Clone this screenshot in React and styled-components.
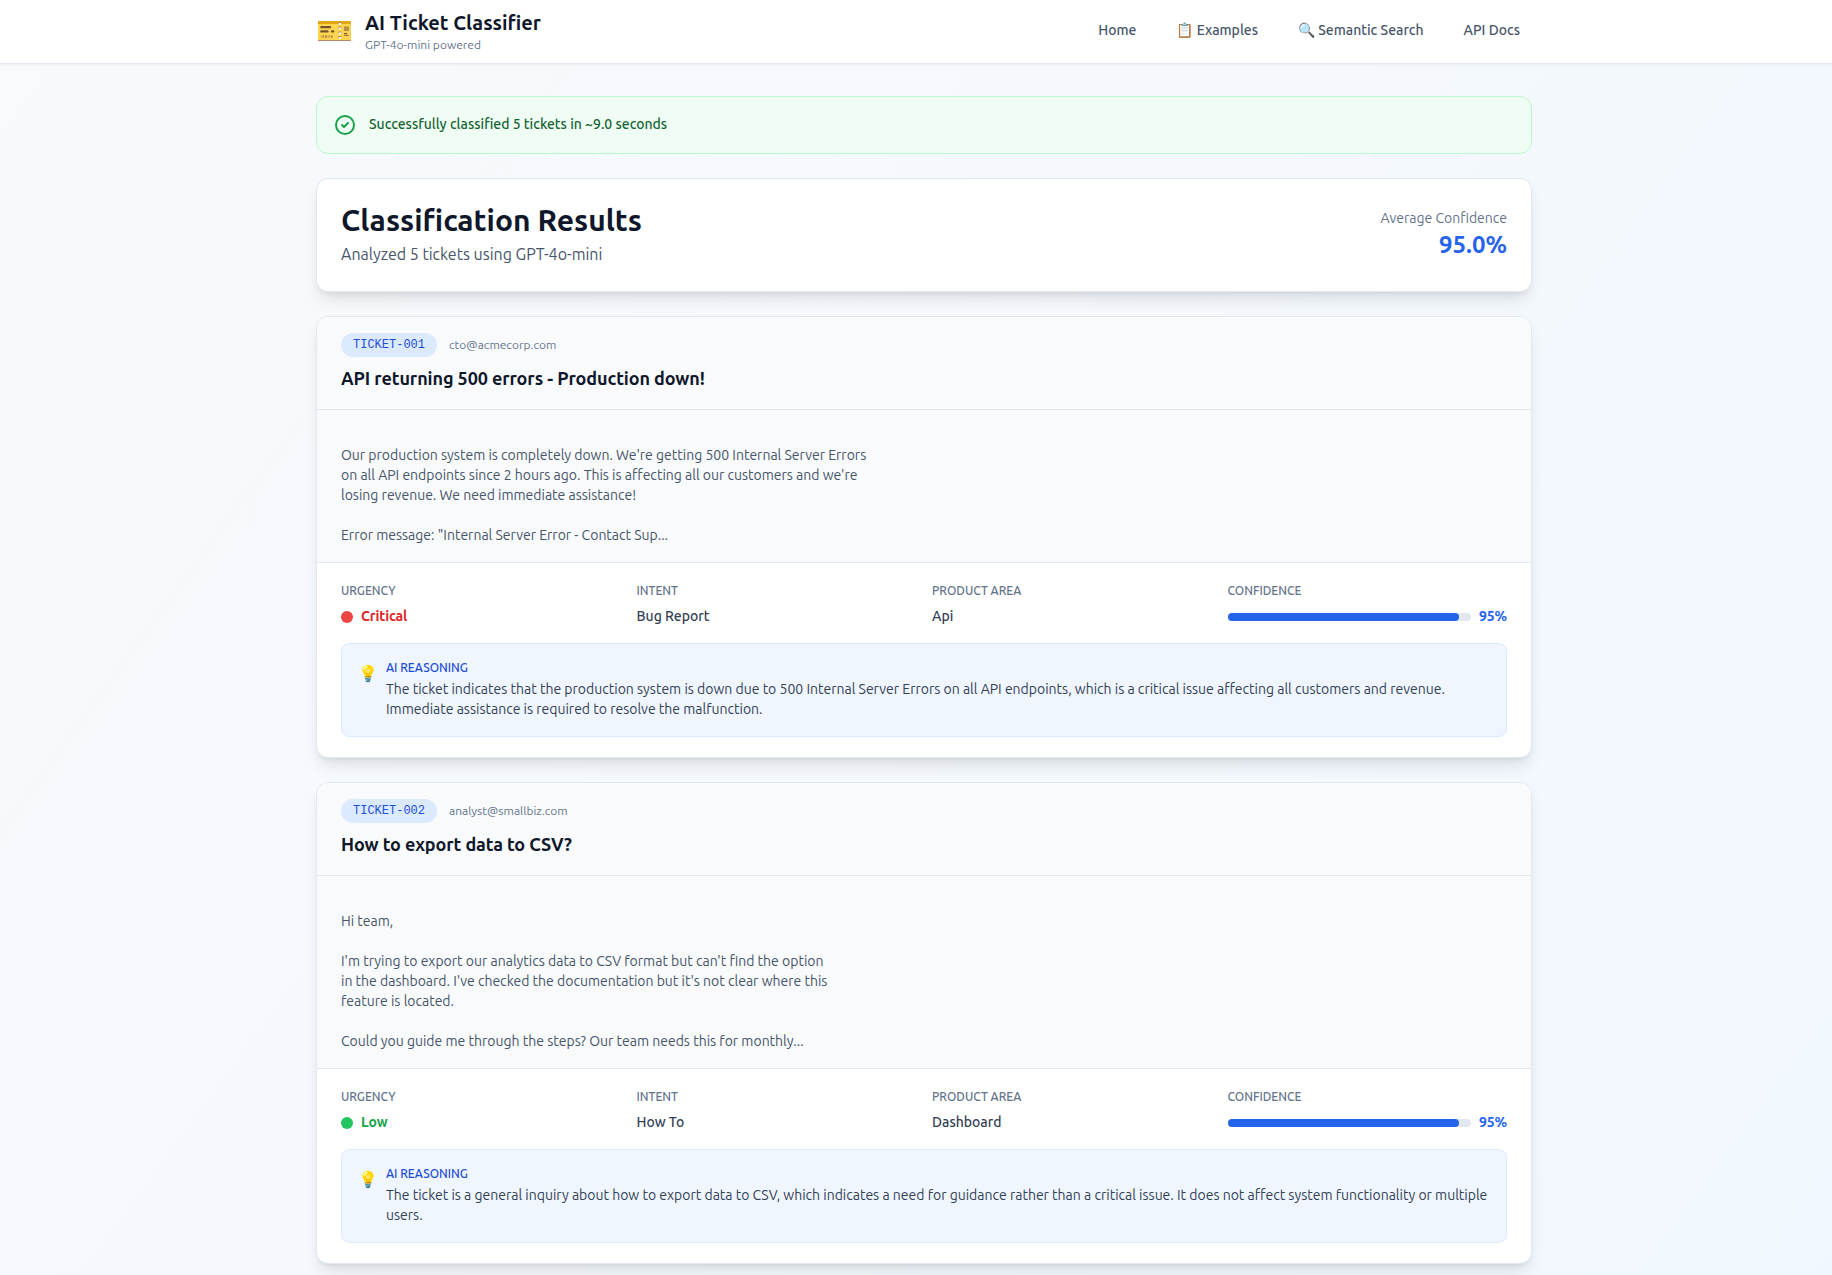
import React from 'react';
import styled, { createGlobalStyle, css } from 'styled-components';

const GlobalStyle = createGlobalStyle`
  *, *::before, *::after { box-sizing: border-box; }
  body {
    margin: 0;
    font-family: Ubuntu, "Open Sans", "Noto Sans", sans-serif;
    font-size: 16px;
    line-height: 24px;
    color: #0f172a;
  }
  h1, h2, h3, p { margin: 0; }
`;

const raised = css`
  margin-top: -1px;
  margin-bottom: 1px;
`;

const Page = styled.div`
  height: 100vh;
  overflow: hidden;
  background: linear-gradient(to bottom right, #f8fafc, #eff6ff) 0 0 / 100% 2500px no-repeat;
`;

const Container = styled.div`
  width: 1280px;
  margin: 0 auto;
  padding: 0 24px 0 40px;
`;

const Header = styled.header`
  height: 64px;
  background: #fff;
  border-bottom: 1px solid #e2e8f0;
  box-shadow: 0 1px 2px rgba(0, 0, 0, 0.05);
`;

const HeaderRow = styled(Container)`
  display: flex;
  align-items: center;
  justify-content: space-between;
  height: 62px;
`;

const Brand = styled.div`
  display: flex;
  align-items: center;
  gap: 12px;
`;

const BrandIcon = styled.span`
  ${raised}
  font-size: 30px;
  line-height: 36px;
`;

const BrandName = styled.h1`
  font-size: 20px;
  line-height: 28px;
  font-weight: 700;
`;

const BrandNote = styled.p`
  font-size: 12px;
  line-height: 16px;
  color: #64748b;
`;

const Nav = styled.nav`
  ${raised}
  display: flex;
  align-items: center;
  gap: 16px;
`;

const NavLink = styled.a`
  padding: 8px 12px;
  font-size: 14px;
  line-height: 20px;
  font-weight: 500;
  color: #475569;
`;

const Main = styled.main`
  display: flex;
  flex-direction: column;
  gap: 24px;
  padding-top: 32px;
`;

const Banner = styled.div`
  display: flex;
  align-items: center;
  gap: 12px;
  padding: 16px;
  border: 1px solid #bbf7d0;
  border-radius: 12px;
  background: #f0fdf4;
`;

const BannerText = styled.p`
  && {
    ${raised}
  }
  color: #166534;
  font-size: 14px;
  line-height: 20px;
  font-weight: 500;
`;

const CheckIcon = styled.svg`
  width: 24px;
  height: 24px;
  color: #16a34a;
`;

const Card = styled.section`
  border: 1px solid #e2e8f0;
  border-radius: 12px;
  background: #fff;
  overflow: hidden;
  box-shadow: 0 10px 15px -3px rgba(0, 0, 0, 0.1), 0 4px 6px -4px rgba(0, 0, 0, 0.1);
`;

const Summary = styled(Card)`
  display: flex;
  align-items: center;
  justify-content: space-between;
  padding: 23px 24px 25px;
`;

const SummaryTitle = styled.h2`
  font-size: 30px;
  line-height: 36px;
  font-weight: 700;
`;

const SummaryNote = styled.p`
  && {
    margin-top: 4px;
  }
  color: #475569;
`;

const Average = styled.div`
  text-align: right;
`;

const AverageLabel = styled.p`
  font-size: 14px;
  line-height: 20px;
  color: #64748b;
`;

const AverageValue = styled.p`
  padding-top: 1px;
  margin-bottom: -1px !important;
  font-size: 24px;
  line-height: 32px;
  font-weight: 700;
  color: #2563eb;
`;

const TicketHeader = styled.div`
  padding: 16px 24px;
  border-bottom: 1px solid #e2e8f0;
  background: #f8fafc;
`;

const TicketMeta = styled.div`
  display: flex;
  align-items: center;
  gap: 12px;
  margin-bottom: 8px;
`;

const TicketId = styled.span`
  padding: 4px 12px;
  border-radius: 12px;
  background: #dbeafe;
  color: #1d4ed8;
  font-family: "Liberation Mono", monospace;
  font-size: 12px;
  line-height: 16px;
`;

const Sender = styled.span`
  font-size: 12px;
  line-height: 16px;
  color: #64748b;
`;

const TicketTitle = styled.h3`
  && {
    ${raised}
  }
  font-size: 18px;
  line-height: 28px;
  font-weight: 600;
  letter-spacing: -0.1px;
`;

const Message = styled.div`
  padding: 15px 24px 17px;
  border-bottom: 1px solid #e2e8f0;
  background: #f8fafc;
  color: #475569;
  font-size: 14px;
  line-height: 20px;
  white-space: pre-line;
`;

const Details = styled.div`
  padding: 20px 24px;
`;

const Metrics = styled.div`
  display: grid;
  grid-template-columns: repeat(4, 1fr);
  gap: 16px;
  margin-bottom: 16px;
`;

const MetricLabel = styled.p`
  font-size: 12px;
  line-height: 16px;
  font-weight: 500;
  text-transform: uppercase;
  color: #64748b;
`;

const MetricValue = styled.div`
  display: flex;
  align-items: center;
  gap: 8px;
  height: 20px;
  margin-top: 8px;
`;

const MetricText = styled.span`
  ${raised}
  font-size: 14px;
  line-height: 20px;
  font-weight: ${(p) => (p.$color ? 600 : 500)};
  letter-spacing: ${(p) => (p.$color ? '-0.1px' : 'normal')};
  color: ${(p) => p.$color || '#334155'};
`;

const Dot = styled.span`
  width: 12px;
  height: 12px;
  border-radius: 50%;
  background: ${(p) => p.$color};
`;

const Track = styled.div`
  flex: 1;
  height: 8px;
  border-radius: 4px;
  background: #e2e8f0;
`;

const Fill = styled.div`
  width: ${(p) => p.$percent}%;
  height: 8px;
  border-radius: 4px;
  background: #2563eb;
`;

const Reasoning = styled.div`
  display: flex;
  align-items: flex-start;
  gap: 8px;
  padding: 16px;
  border: 1px solid #dbeafe;
  border-radius: 8px;
  background: #eff6ff;
`;

const ReasoningTitle = styled.p`
  font-size: 12px;
  line-height: 16px;
  font-weight: 500;
  color: #1d4ed8;
`;

const ReasoningText = styled.p`
  padding: 3px 0 1px;
  font-size: 14px;
  line-height: 20px;
  color: #334155;
`;

const Bulb = styled.span`
  padding-top: 1px;
`;

const levels = {
  Critical: { dot: '#ef4444', text: '#dc2626' },
  Low: { dot: '#22c55e', text: '#16a34a' },
};

const tickets = [
  {
    id: 'TICKET-001',
    sender: 'cto@acmecorp.com',
    title: 'API returning 500 errors - Production down!',
    message: `
Our production system is completely down. We're getting 500 Internal Server Errors
on all API endpoints since 2 hours ago. This is affecting all our customers and we're
losing revenue. We need immediate assistance!

Error message: "Internal Server Error - Contact Sup...`,
    urgency: 'Critical',
    intent: 'Bug Report',
    area: 'Api',
    confidence: 95,
    reasoning:
      'The ticket indicates that the production system is down due to 500 Internal Server Errors on all API endpoints, which is a critical issue affecting all customers and revenue. Immediate assistance is required to resolve the malfunction.',
  },
  {
    id: 'TICKET-002',
    sender: 'analyst@smallbiz.com',
    title: 'How to export data to CSV?',
    message: `
Hi team,

I'm trying to export our analytics data to CSV format but can't find the option
in the dashboard. I've checked the documentation but it's not clear where this
feature is located.

Could you guide me through the steps? Our team needs this for monthly...`,
    urgency: 'Low',
    intent: 'How To',
    area: 'Dashboard',
    confidence: 95,
    reasoning:
      'The ticket is a general inquiry about how to export data to CSV, which indicates a need for guidance rather than a critical issue. It does not affect system functionality or multiple users.',
  },
];

function Metric({ label, children }) {
  return (
    <div>
      <MetricLabel>{label}</MetricLabel>
      <MetricValue>{children}</MetricValue>
    </div>
  );
}

function Ticket({ ticket }) {
  const level = levels[ticket.urgency];
  return (
    <Card>
      <TicketHeader>
        <TicketMeta>
          <TicketId>{ticket.id}</TicketId>
          <Sender>{ticket.sender}</Sender>
        </TicketMeta>
        <TicketTitle>{ticket.title}</TicketTitle>
      </TicketHeader>
      <Message>{ticket.message}</Message>
      <Details>
        <Metrics>
          <Metric label="Urgency">
            <Dot $color={level.dot} />
            <MetricText $color={level.text}>{ticket.urgency}</MetricText>
          </Metric>
          <Metric label="Intent">
            <MetricText>{ticket.intent}</MetricText>
          </Metric>
          <Metric label="Product Area">
            <MetricText>{ticket.area}</MetricText>
          </Metric>
          <Metric label="Confidence">
            <Track>
              <Fill $percent={ticket.confidence} />
            </Track>
            <MetricText $color="#2563eb">{ticket.confidence}%</MetricText>
          </Metric>
        </Metrics>
        <Reasoning>
          <Bulb>💡</Bulb>
          <div>
            <ReasoningTitle>AI REASONING</ReasoningTitle>
            <ReasoningText>{ticket.reasoning}</ReasoningText>
          </div>
        </Reasoning>
      </Details>
    </Card>
  );
}

export default function App() {
  return (
    <Page>
      <GlobalStyle />
      <Header>
        <HeaderRow>
          <Brand>
            <BrandIcon>🎫</BrandIcon>
            <div>
              <BrandName>AI Ticket Classifier</BrandName>
              <BrandNote>GPT-4o-mini powered</BrandNote>
            </div>
          </Brand>
          <Nav>
            <NavLink>Home</NavLink>
            <NavLink>📋 Examples</NavLink>
            <NavLink>🔍 Semantic Search</NavLink>
            <NavLink>API Docs</NavLink>
          </Nav>
        </HeaderRow>
      </Header>
      <Container>
        <Main>
          <Banner>
            <CheckIcon viewBox="0 0 24 24" fill="none" stroke="currentColor" strokeWidth="2" strokeLinecap="round" strokeLinejoin="round">
              <path d="M9 12l2 2 4-4m6 2a9 9 0 11-18 0 9 9 0 0118 0z" />
            </CheckIcon>
            <BannerText>Successfully classified 5 tickets in ~9.0 seconds</BannerText>
          </Banner>
          <Summary>
            <div>
              <SummaryTitle>Classification Results</SummaryTitle>
              <SummaryNote>Analyzed 5 tickets using GPT-4o-mini</SummaryNote>
            </div>
            <Average>
              <AverageLabel>Average Confidence</AverageLabel>
              <AverageValue>95.0%</AverageValue>
            </Average>
          </Summary>
          {tickets.map((t) => (
            <Ticket key={t.id} ticket={t} />
          ))}
        </Main>
      </Container>
    </Page>
  );
}
